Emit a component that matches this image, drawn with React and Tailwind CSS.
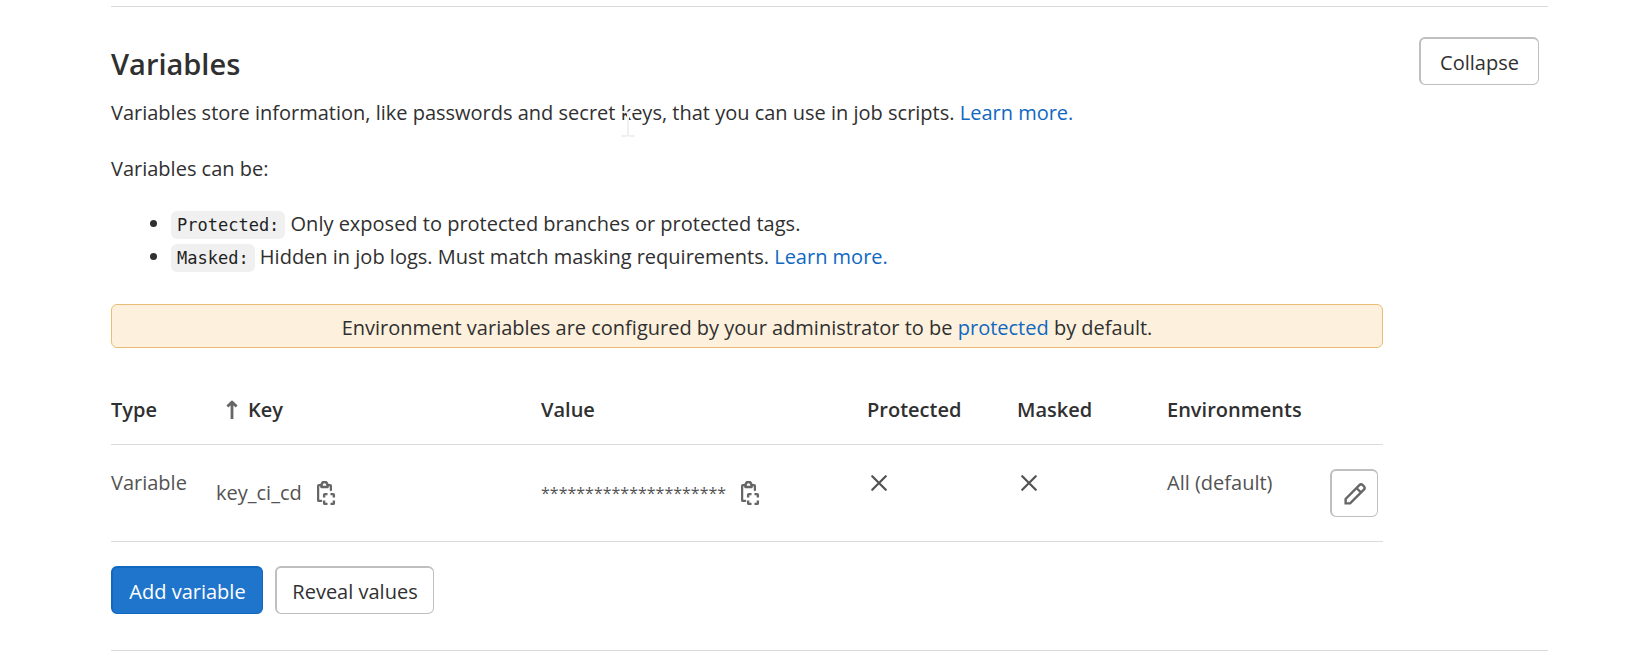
import React from "react";

const buttonBase =
  "flex h-12 items-center justify-center rounded-md text-[20px] leading-7 cursor-pointer";
const outlined =
  "bg-white text-[#303030] border border-t-2 border-l-2 border-[#bfbfbf]";

function CopyIcon() {
  return (
    <svg viewBox="0 0 16 16" className="size-6" fill="none" stroke="#666" strokeWidth="1.5" aria-hidden="true">
      <path d="M4.75 13.25H3.25a.5.5 0 0 1-.5-.5v-9.5a.5.5 0 0 1 .5-.5h1.5M9.25 2.75h1.5a.5.5 0 0 1 .5.5V6" strokeLinecap="round" />
      <path d="M5 4V2.6a2 2 0 0 1 4 0V4z" strokeLinejoin="round" strokeWidth="1.7" />
      <path d="M6.75 11V9.25a.5.5 0 0 1 .5-.5H9M11 8.75h1.75a.5.5 0 0 1 .5.5V11M13.25 13v1.75a.5.5 0 0 1-.5.5H11M9 15.25H7.25a.5.5 0 0 1-.5-.5V13" strokeWidth="1.6" />
    </svg>
  );
}

function CrossIcon() {
  return (
    <svg viewBox="0 0 16 16" className="mt-0.5 size-6" fill="none" stroke="#535353" strokeWidth="1.5" strokeLinecap="round" role="img" aria-label="No">
      <path d="M3.5 3.5l9 9M12.5 3.5l-9 9" />
    </svg>
  );
}

function PencilIcon() {
  return (
    <svg viewBox="0 0 16 16" className="size-6" fill="none" stroke="#666" strokeWidth="1.6" aria-hidden="true">
      <path d="M1.75 14.25v-3L10.9 2.1a1.6 1.6 0 0 1 2.25 0l.75.75a1.6 1.6 0 0 1 0 2.25L4.75 14.25zM9 4l3 3" />
    </svg>
  );
}

function ArrowUpIcon() {
  return (
    <svg viewBox="0 0 12 20" className="h-5 w-3" fill="none" stroke="#666" strokeWidth="2.8" aria-hidden="true">
      <path d="M6 19V2M1.4 6.4L6 2l4.6 4.4" strokeLinejoin="round" />
    </svg>
  );
}

function TextCursor() {
  return (
    <svg viewBox="0 0 14 26" className="pointer-events-none absolute top-3 left-0 h-[26px] w-3.5" fill="none" stroke="#f0f0f0" strokeWidth="2" aria-hidden="true">
      <path d="M0 1h5l2 1 2-1h5M7 2v22M0 25h5l2-1 2 1h5" />
    </svg>
  );
}

function TextLink({ children }) {
  return <a href="#" className="text-[#1068bf]">{children}</a>;
}

function Code({ children }) {
  return (
    <code className="rounded-md bg-[#f0f0f0] px-1.5 py-1 font-['DejaVu_Sans_Mono',monospace] text-[17px] leading-6 text-[#1f1f1f]">
      {children}
    </code>
  );
}

const th = "h-[69px] border-b border-[#dbdbdb] p-0 text-left align-middle font-semibold text-[#303030]";
const td = "h-[97px] border-b border-[#dbdbdb] p-0 pt-6 align-top text-[#535353]";

export default function App() {
  return (
    <main className="bg-white pt-1.5 pr-[85px] pl-[111px] font-['Open_Sans','Noto_Sans',sans-serif] text-[20px] leading-7 text-[#303030]">
      <section className="border-y border-[#dbdbdb] pb-9">
        <header className="flex items-start justify-between pt-[30px] pr-[9px]">
          <div>
            <h2 className="mt-2 text-[29px] leading-[38px] font-semibold">Variables</h2>
            <p className="mt-4">
              Variables store information, like passwords and secret <span className="relative">keys<TextCursor /></span>, that you can use in job scripts.{" "}
              <TextLink>Learn more.</TextLink>
            </p>
          </div>
          <button type="button" className={`${buttonBase} ${outlined} w-[120px] pt-0.5`}>Collapse</button>
        </header>
        <div className="pr-[165px]">
          <p className="mt-7">Variables can be:</p>
          <ul className="mt-6 list-disc pl-[60px] leading-[33px]">
            <li><Code>Protected:</Code> Only exposed to protected branches or protected tags.</li>
            <li><Code>Masked:</Code> Hidden in job logs. Must match masking requirements. <TextLink>Learn more.</TextLink></li>
          </ul>
          <p className="mt-[31px] rounded-md border border-[#e9be74] bg-[#fdf1dd] pt-[9px] pb-[5px] text-center">
            Environment variables are configured by your administrator to be <TextLink>protected</TextLink> by default.
          </p>
          <table className="mt-7 w-full table-fixed border-separate border-spacing-0">
            <colgroup>
              <col className="w-[105px]" />
              <col className="w-[325px]" />
              <col className="w-[326px]" />
              <col className="w-[150px]" />
              <col className="w-[150px]" />
              <col className="w-[163px]" />
              <col />
            </colgroup>
            <thead>
              <tr>
                <th className={th}>Type</th>
                <th className={th}>
                  <span className="flex items-center gap-2.5 pl-2.5"><ArrowUpIcon />Key</span>
                </th>
                <th className={th}>Value</th>
                <th className={th}>Protected</th>
                <th className={th}>Masked</th>
                <th className={th}>Environments</th>
                <th className={th} aria-label="Actions" />
              </tr>
            </thead>
            <tbody>
              <tr>
                <td className={td}>Variable</td>
                <td className={td}>
                  <div className="flex h-12 items-center gap-3">
                    <span>key_ci_cd</span>
                    <button type="button" aria-label="Copy key" className="cursor-pointer"><CopyIcon /></button>
                  </div>
                </td>
                <td className={td}>
                  <div className="flex h-12 items-center gap-3">
                    <span className="text-base">*********************</span>
                    <button type="button" aria-label="Copy value" className="cursor-pointer"><CopyIcon /></button>
                  </div>
                </td>
                <td className={td}><CrossIcon /></td>
                <td className={td}><CrossIcon /></td>
                <td className={td}>All (default)</td>
                <td className={td}>
                  <button type="button" aria-label="Edit variable" className={`${buttonBase} ${outlined} w-12`}><PencilIcon /></button>
                </td>
              </tr>
            </tbody>
          </table>
          <div className="mt-6 flex gap-3">
            <button type="button" className={`${buttonBase} w-[152px] border border-t-2 border-l-2 border-[#1068bf] bg-[#1f75cb] pt-0.5 text-white`}>Add variable</button>
            <button type="button" className={`${buttonBase} ${outlined} w-[159px] pt-0.5`}>Reveal values</button>
          </div>
        </div>
      </section>
    </main>
  );
}
